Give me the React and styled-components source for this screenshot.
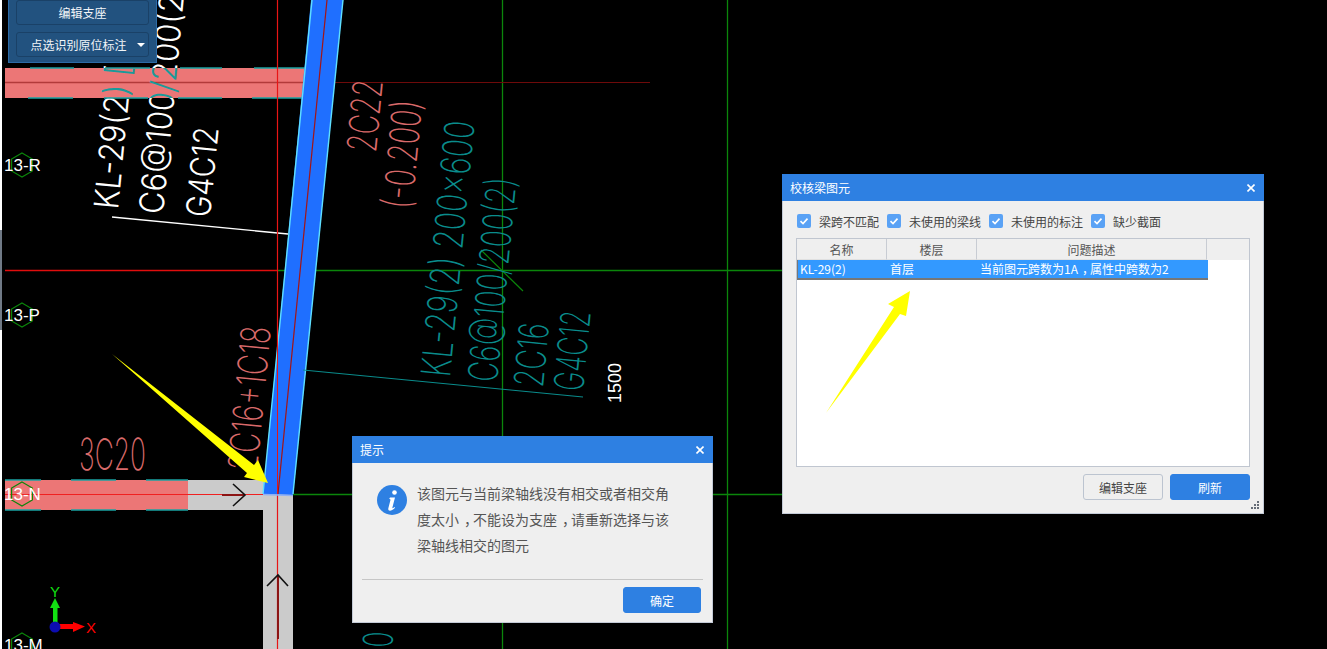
import React from 'react';
import styled, { createGlobalStyle } from 'styled-components';

const UI_FONT = `"Noto Sans CJK SC", "Liberation Sans", sans-serif`;
const BLUE = '#2e80e2';

const GlobalStyle = createGlobalStyle`
  html, body {
    margin: 0;
    padding: 0;
    background: #000;
    overflow: hidden;
  }
`;

const Canvas = styled.div`
  position: relative;
  width: 1327px;
  height: 649px;
  overflow: hidden;
  background: #000;
  font-family: ${UI_FONT};
`;

const Drawing = styled.svg`
  display: block;
  width: 1327px;
  height: 649px;
`;

const EdgeStrip = styled.div`
  position: absolute;
  left: 0;
  top: 0;
  width: 2px;
  height: 649px;
  background: linear-gradient(#fff 230px, #707a86 230px, #707a86 330px, #fff 330px);
`;

const ToolPanel = styled.div`
  position: absolute;
  left: 8px;
  top: -10px;
  width: 149px;
  height: 73px;
  box-sizing: border-box;
  padding: 0 7px 5px;
  display: flex;
  flex-direction: column;
  justify-content: flex-end;
  gap: 7px;
  background: #22527f;
  border: 1px solid #2d6ba6;
`;

const ToolButton = styled.div`
  height: 25px;
  box-sizing: border-box;
  padding-left: ${p => (p.$menu ? '10px' : '0')};
  display: flex;
  align-items: center;
  justify-content: center;
  gap: 10px;
  color: #f2f5f8;
  font-size: 12px;
  background: #22527f;
  border: 1px solid #1a4167;
  border-radius: 3px;
`;

const Caret = styled.span`
  width: 0;
  height: 0;
  border-left: 4px solid transparent;
  border-right: 4px solid transparent;
  border-top: 4px solid #fff;
`;

const Dialog = styled.div`
  position: absolute;
  left: ${p => p.$x}px;
  top: ${p => p.$y}px;
  width: ${p => p.$w}px;
  height: ${p => p.$h}px;
  box-sizing: border-box;
  display: flex;
  flex-direction: column;
  background: #efefef;
  border: 1px solid #c3cad6;
  border-top: none;
`;

const TitleBar = styled.div`
  flex: none;
  height: 27px;
  margin: 0 -1px;
  padding: 0 9px 0 8px;
  display: flex;
  align-items: center;
  justify-content: space-between;
  background: ${BLUE};
  color: #fff;
  font-size: 12px;
`;

const CloseIcon = styled.svg`
  width: 8px;
  height: 8px;
  stroke: #fff;
  stroke-width: 1.6;
`;

const MessageBody = styled.div`
  flex: 1;
  display: flex;
  gap: 10px;
  padding: 17px 40px 0 24px;
`;

const InfoBadge = styled.svg`
  flex: none;
  width: 30px;
  height: 30px;
  margin-top: 5px;
`;

const MessageText = styled.p`
  margin: 0;
  color: #555;
  font-size: 14px;
  line-height: 26px;
`;

const Comma = styled.span`
  display: inline-block;
  transform: translateX(${p => p.$shift}px);
`;

const Divider = styled.div`
  margin: 0 9px;
  height: 1px;
  background: #c6c6c6;
`;

const DialogFooter = styled.div`
  flex: none;
  display: flex;
  justify-content: flex-end;
  gap: 7px;
  padding: ${p => p.$pad};
`;

const Button = styled.div`
  width: ${p => p.$w}px;
  height: 26px;
  box-sizing: border-box;
  display: flex;
  align-items: center;
  justify-content: center;
  font-size: 12px;
  border-radius: 3px;
  color: ${p => (p.$primary ? '#fff' : '#444')};
  background: ${p => (p.$primary ? BLUE : '#efefef')};
  border: 1px solid ${p => (p.$primary ? BLUE : '#bcc4d0')};
`;

const FilterRow = styled.div`
  flex: none;
  height: 37px;
  padding: 3px 0 0 14px;
  box-sizing: border-box;
  display: flex;
  align-items: center;
  gap: 8px;
`;

const Check = styled.label`
  display: flex;
  align-items: center;
  gap: 8px;
  color: #444;
  font-size: 12px;
`;

const CheckBox = styled.span`
  width: 14px;
  height: 14px;
  display: flex;
  align-items: center;
  justify-content: center;
  background: #5aa2f5;
  border-radius: 2px;
`;

const Table = styled.div`
  flex: none;
  margin: 0 13px;
  height: 229px;
  box-sizing: border-box;
  background: #fff;
  border: 1px solid #c0c6d0;
`;

const Row = styled.div`
  display: grid;
  grid-template-columns: 90px 90px 230px;
`;

const HeadRow = styled(Row)`
  height: 21px;
  background: #efefef;
`;

const HeadCell = styled.div`
  display: flex;
  align-items: center;
  justify-content: center;
  color: #555;
  font-size: 12px;
  border-right: 1px solid #c8ccd3;
  border-bottom: 1px solid #e0e0e0;
`;

const DataRow = styled(Row)`
  height: 20px;
  width: 411px;
  box-sizing: border-box;
  background: #3399ff;
  border-bottom: 2px solid #777;
  border-left: 1px solid #777;
`;

const DataCell = styled.div`
  padding-left: 2px;
  color: #fff;
  font-size: 12px;
  line-height: 18px;
  white-space: nowrap;
`;

const Grip = styled.svg`
  position: absolute;
  right: 3px;
  bottom: 3px;
  width: 9px;
  height: 9px;
  fill: #666d78;
`;

const OverlayArrow = styled.svg`
  position: absolute;
  left: 820px;
  top: 285px;
  width: 100px;
  height: 135px;
`;

const PINK = '#d96a6a';
const TEAL = '#0a8c8c';
const GRID_GREEN = '#0b860b';

const cadLabels = [
  { text: '2C22', x: 376, y: 153, len: 72, color: PINK },
  { text: '(-0.200)', x: 412, y: 210, len: 109, color: PINK },
  { text: '2C16+1C18', x: 257, y: 472, len: 145, color: PINK },
  { text: '3C20', x: 79, y: 470, len: 67, size: 44, rot: 0, color: PINK },
  { text: 'KL-29(2) 200x600', x: 450, y: 378, len: 257, color: TEAL },
  { text: 'C6@100/200(2)', x: 497, y: 383, len: 205, color: TEAL },
  { text: '2C16', x: 543, y: 388, len: 64, color: TEAL },
  { text: 'G4C12', x: 583, y: 392, len: 80, color: TEAL },
  { text: '00', x: 392, y: 664, len: 32, rot: -88, color: TEAL },
];

const whiteLabels = [
  { text: 'KL-29(2) [', x: 118, y: 210, len: 144 },
  { text: 'C6@100/200(2)', x: 163, y: 215, len: 232 },
  { text: 'G4C12', x: 210, y: 218, len: 90 },
];

const axisTags = [
  { text: '13-R', cy: 165 },
  { text: '13-P', cy: 315 },
  { text: '13-N', cy: 494 },
  { text: '13-M', cy: 645 },
];

const dashes = (segments, y) =>
  segments.map(([a, b]) => (
    <line key={`${y}-${a}`} x1={a} y1={y} x2={b} y2={y} stroke="#1aa3a3" strokeWidth="1.4" />
  ));

const hexagon = cy => {
  const cx = 22;
  const r = 12;
  return [-90, -30, 30, 90, 150, 210]
    .map(a => `${cx + r * Math.cos((a * Math.PI) / 180)},${cy + r * Math.sin((a * Math.PI) / 180)}`)
    .join(' ');
};

const WhiteText = ({ fill }) =>
  whiteLabels.map(l => (
    <text
      key={l.text}
      transform={`translate(${l.x} ${l.y}) rotate(-84.5)`}
      fontFamily="Inter, sans-serif"
      fontWeight="300"
      fontSize="34"
      textLength={l.len}
      lengthAdjust="spacingAndGlyphs"
      fill={fill}
    >
      {l.text}
    </text>
  ));

const CadDrawing = () => (
  <Drawing viewBox="0 0 1327 649">
    <defs>
      <clipPath id="topBand">
        <rect x="5" y="68" width="300" height="30" />
      </clipPath>
    </defs>

    {/* grid lines */}
    <line x1="502.5" y1="0" x2="502.5" y2="649" stroke={GRID_GREEN} strokeWidth="1.3" />
    <line x1="727.5" y1="0" x2="727.5" y2="649" stroke={GRID_GREEN} strokeWidth="1.3" />
    <line x1="277" y1="270.5" x2="782" y2="270.5" stroke={GRID_GREEN} strokeWidth="1.3" />
    <line x1="293" y1="494.5" x2="782" y2="494.5" stroke={GRID_GREEN} strokeWidth="1.3" />
    <line x1="305" y1="82.5" x2="650" y2="82.5" stroke="#6e0a0a" strokeWidth="1.2" />
    <line x1="5" y1="270.5" x2="278" y2="270.5" stroke="#e00d0d" strokeWidth="1.3" />

    <WhiteText fill="#fff" />
    <line x1="112" y1="217" x2="288" y2="234" stroke="#fff" strokeWidth="1.4" />

    {/* beams */}
    <rect x="5" y="68" width="300" height="30" fill="#ec7676" />
    <line x1="5" y1="82.5" x2="305" y2="82.5" stroke="#b23a3a" strokeWidth="1.4" />
    {dashes([[30, 74], [105, 150], [180, 222], [254, 305]], 68)}
    {dashes([[28, 73], [104, 148], [178, 222], [252, 305]], 98)}
    <g clipPath="url(#topBand)">
      <WhiteText fill="#1a9a9a" />
    </g>

    <path d="M188 480H293V649H263V510H188Z" fill="#cbcbcb" />
    <rect x="5" y="480" width="183" height="30" fill="#ec7676" />
    {dashes([[5, 41], [71, 116], [146, 188]], 480)}
    {dashes([[5, 41], [71, 116], [146, 188]], 510)}
    <line x1="5" y1="494.5" x2="263" y2="494.5" stroke="#f02020" />

    <line x1="277.5" y1="0" x2="277.5" y2="649" stroke="#e81515" strokeWidth="1.2" />
    <polygon points="311,0 343,0 293,495 263,494" fill="#1f6fff" />
    <line x1="312" y1="0" x2="263" y2="494" stroke="#5fe0ff" strokeWidth="1.4" />
    <line x1="343" y1="0" x2="293" y2="494" stroke="#5fe0ff" strokeWidth="1.4" />
    <line x1="263" y1="494.5" x2="293" y2="495.5" stroke="#8fb0f5" strokeWidth="1.5" />
    <line x1="327" y1="0" x2="278" y2="494" stroke="#a51414" strokeWidth="1.2" />
    <line x1="277.5" y1="270" x2="277.5" y2="494" stroke="#e81515" />

    {/* beam direction marks */}
    <line x1="222" y1="495" x2="245" y2="495" stroke="#8c1414" strokeWidth="2" />
    <path d="M233 484L245 495L233 506" fill="none" stroke="#111" strokeWidth="1.6" />
    <line x1="278" y1="575" x2="278" y2="639" stroke="#8c1414" strokeWidth="2" />
    <path d="M267 586L278 575L288 586" fill="none" stroke="#111" strokeWidth="1.6" />

    {/* leaders and cad texts */}
    <line x1="303" y1="370" x2="583" y2="397" stroke={TEAL} />
    <line x1="481" y1="250" x2="523" y2="291" stroke={GRID_GREEN} strokeWidth="1.2" />
    {cadLabels.map(l => (
      <text
        key={l.text}
        transform={`translate(${l.x} ${l.y}) rotate(${l.rot ?? -84.5})`}
        fontFamily="Inter, Roboto, sans-serif"
        fontWeight="200"
        fontSize={l.size ?? 41}
        textLength={l.len}
        lengthAdjust="spacingAndGlyphs"
        fill={l.color}
      >
        {l.text}
      </text>
    ))}
    <text
      transform="translate(621 403) rotate(-90)"
      fontFamily="Liberation Sans, sans-serif"
      fontSize="18"
      fill="#fff"
    >
      1500
    </text>

    {/* axis tags */}
    {axisTags.map(t => (
      <g key={t.text}>
        <polygon points={hexagon(t.cy)} fill="none" stroke={GRID_GREEN} strokeWidth="1.2" />
        <text x="4" y={t.cy + 6} fontFamily="Liberation Sans, sans-serif" fontSize="17" fill="#fff">
          {t.text}
        </text>
      </g>
    ))}

    {/* ucs */}
    <rect x="53" y="606" width="4.5" height="20" fill="#12e012" />
    <polygon points="50,608 60,608 55,598" fill="#12e012" />
    <rect x="58" y="624" width="16" height="5" fill="#f00" />
    <polygon points="73,622 85,626.5 73,632" fill="#f00" />
    <circle cx="55" cy="627" r="5.5" fill="#0c0cb0" />
    <text x="50" y="597" fontFamily="Liberation Sans, sans-serif" fontSize="15" fill="#12e012">Y</text>
    <text x="86" y="633" fontFamily="Liberation Sans, sans-serif" fontSize="15" fill="#f00">X</text>

    {/* callout arrow */}
    <polygon points="112,354 254,465 258,460 268,483 244,477 247,473" fill="#ff0" />
  </Drawing>
);

const Tick = () => (
  <svg width="10" height="10" viewBox="0 0 10 10" fill="none" stroke="#fff" strokeWidth="1.6">
    <path d="M1.5 5.2L4 7.6L8.5 2.6" />
  </svg>
);

const Close = () => (
  <CloseIcon viewBox="0 0 8 8">
    <path d="M0.5 0.5L7.5 7.5M7.5 0.5L0.5 7.5" />
  </CloseIcon>
);

const filters = ['梁跨不匹配', '未使用的梁线', '未使用的标注', '缺少截面'];

const App = () => (
  <Canvas>
    <GlobalStyle />
    <CadDrawing />
    <EdgeStrip />

    <ToolPanel>
      <ToolButton>编辑支座</ToolButton>
      <ToolButton $menu>
        点选识别原位标注
        <Caret />
      </ToolButton>
    </ToolPanel>

    <Dialog $x={352} $y={436} $w={361} $h={187}>
      <TitleBar>
        提示
        <Close />
      </TitleBar>
      <MessageBody>
        <InfoBadge viewBox="0 0 30 30">
          <circle cx="15" cy="15" r="15" fill={BLUE} />
          <circle cx="17.5" cy="7.5" r="2.3" fill="#fff" />
          <path d="M13 12.5h5l-2.6 10c-.2.9.6 1 2.2-.4l.4.6c-2 2.3-3.6 3-5 3-1.5 0-2-1-1.6-2.6l2-7.8c.2-.9-.2-1.2-1.2-1.2z" fill="#fff" />
        </InfoBadge>
        <MessageText>
          该图元与当前梁轴线没有相交或者相交角度太小<Comma $shift={5}>，</Comma>不能设为支座<Comma $shift={5}>，</Comma>请重新选择与该梁轴线相交的图元
        </MessageText>
      </MessageBody>
      <Divider />
      <DialogFooter $pad="7px 11px 9px 0">
        <Button $w={78} $primary>确定</Button>
      </DialogFooter>
    </Dialog>

    <Dialog $x={782} $y={174} $w={482} $h={340}>
      <TitleBar>
        校核梁图元
        <Close />
      </TitleBar>
      <FilterRow>
        {filters.map(f => (
          <Check key={f}>
            <CheckBox>
              <Tick />
            </CheckBox>
            {f}
          </Check>
        ))}
      </FilterRow>
      <Table>
        <HeadRow>
          <HeadCell>名称</HeadCell>
          <HeadCell>楼层</HeadCell>
          <HeadCell>问题描述</HeadCell>
        </HeadRow>
        <DataRow>
          <DataCell>KL-29(2)</DataCell>
          <DataCell>首层</DataCell>
          <DataCell>当前图元跨数为1A<Comma $shift={4}>，</Comma>属性中跨数为2</DataCell>
        </DataRow>
      </Table>
      <DialogFooter $pad="7px 13px 0 0">
        <Button $w={80}>编辑支座</Button>
        <Button $w={80} $primary>刷新</Button>
      </DialogFooter>
      <Grip viewBox="0 0 9 9">
        <rect x="6" y="0" width="2" height="2" />
        <rect x="3" y="3" width="2" height="2" />
        <rect x="6" y="3" width="2" height="2" />
        <rect x="0" y="6" width="2" height="2" />
        <rect x="3" y="6" width="2" height="2" />
        <rect x="6" y="6" width="2" height="2" />
      </Grip>
    </Dialog>

    <OverlayArrow viewBox="820 285 100 135">
      <polygon points="826,413 894,307 888,304 910,291 906,316 900,314" fill="#ff0" />
    </OverlayArrow>
  </Canvas>
);

export default App;
